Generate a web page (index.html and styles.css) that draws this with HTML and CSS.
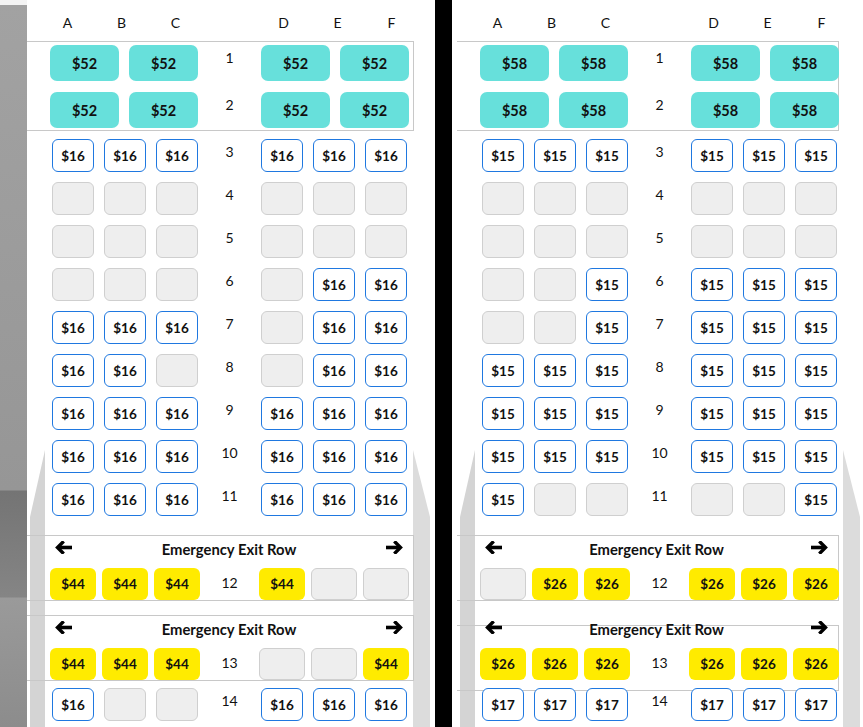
FILE: index.html
```html
<!DOCTYPE html>
<html lang="en">
<head>
<meta charset="utf-8">
<title>Seat map</title>
<link rel="stylesheet" href="styles.css">
</head>
<body>
<div class="strip"></div>

<section class="panel panel--left">
  <div class="map">
    <div class="cols"><span>A</span><span>B</span><span>C</span><span></span><span>D</span><span>E</span><span>F</span></div>

    <div class="prem">
      <div class="prow"><div class="grp"><span class="p">$52</span><span class="p">$52</span></div><span class="num">1</span><div class="grp"><span class="p">$52</span><span class="p">$52</span></div></div>
      <div class="prow"><div class="grp"><span class="p">$52</span><span class="p">$52</span></div><span class="num">2</span><div class="grp"><span class="p">$52</span><span class="p">$52</span></div></div>
    </div>

    <div class="rows">
      <div class="row"><div class="grp"><span class="s">$16</span><span class="s">$16</span><span class="s">$16</span></div><span class="num">3</span><div class="grp"><span class="s">$16</span><span class="s">$16</span><span class="s">$16</span></div></div>
      <div class="row"><div class="grp"><span class="s na"></span><span class="s na"></span><span class="s na"></span></div><span class="num">4</span><div class="grp"><span class="s na"></span><span class="s na"></span><span class="s na"></span></div></div>
      <div class="row"><div class="grp"><span class="s na"></span><span class="s na"></span><span class="s na"></span></div><span class="num">5</span><div class="grp"><span class="s na"></span><span class="s na"></span><span class="s na"></span></div></div>
      <div class="row"><div class="grp"><span class="s na"></span><span class="s na"></span><span class="s na"></span></div><span class="num">6</span><div class="grp"><span class="s na"></span><span class="s">$16</span><span class="s">$16</span></div></div>
      <div class="row"><div class="grp"><span class="s">$16</span><span class="s">$16</span><span class="s">$16</span></div><span class="num">7</span><div class="grp"><span class="s na"></span><span class="s">$16</span><span class="s">$16</span></div></div>
      <div class="row"><div class="grp"><span class="s">$16</span><span class="s">$16</span><span class="s na"></span></div><span class="num">8</span><div class="grp"><span class="s na"></span><span class="s">$16</span><span class="s">$16</span></div></div>
      <div class="row"><div class="grp"><span class="s">$16</span><span class="s">$16</span><span class="s">$16</span></div><span class="num">9</span><div class="grp"><span class="s">$16</span><span class="s">$16</span><span class="s">$16</span></div></div>
      <div class="row"><div class="grp"><span class="s">$16</span><span class="s">$16</span><span class="s">$16</span></div><span class="num">10</span><div class="grp"><span class="s">$16</span><span class="s">$16</span><span class="s">$16</span></div></div>
      <div class="row"><div class="grp"><span class="s">$16</span><span class="s">$16</span><span class="s">$16</span></div><span class="num">11</span><div class="grp"><span class="s">$16</span><span class="s">$16</span><span class="s">$16</span></div></div>
    </div>

    <div class="exit exit--first">
      <div class="exit-title">
        <svg class="arrow" viewBox="0 0 18 13"><path d="M7.5 1.5 L2.5 6.5 L7.5 11.5" fill="none" stroke="#000" stroke-width="3.4" stroke-linecap="square"/><path d="M3 6.5 H17" stroke="#000" stroke-width="3.6"/></svg>
        <span class="exit-label">Emergency Exit Row</span>
        <svg class="arrow" viewBox="0 0 18 13"><path d="M10.5 1.5 L15.5 6.5 L10.5 11.5" fill="none" stroke="#000" stroke-width="3.4" stroke-linecap="square"/><path d="M1 6.5 H15" stroke="#000" stroke-width="3.6"/></svg>
      </div>
      <div class="xrow"><div class="grp"><span class="x">$44</span><span class="x">$44</span><span class="x">$44</span></div><span class="num">12</span><div class="grp"><span class="x">$44</span><span class="x na"></span><span class="x na"></span></div></div>
    </div>

    <div class="exit">
      <div class="exit-title">
        <svg class="arrow" viewBox="0 0 18 13"><path d="M7.5 1.5 L2.5 6.5 L7.5 11.5" fill="none" stroke="#000" stroke-width="3.4" stroke-linecap="square"/><path d="M3 6.5 H17" stroke="#000" stroke-width="3.6"/></svg>
        <span class="exit-label">Emergency Exit Row</span>
        <svg class="arrow" viewBox="0 0 18 13"><path d="M10.5 1.5 L15.5 6.5 L10.5 11.5" fill="none" stroke="#000" stroke-width="3.4" stroke-linecap="square"/><path d="M1 6.5 H15" stroke="#000" stroke-width="3.6"/></svg>
      </div>
      <div class="xrow"><div class="grp"><span class="x">$44</span><span class="x">$44</span><span class="x">$44</span></div><span class="num">13</span><div class="grp"><span class="x na"></span><span class="x na"></span><span class="x">$44</span></div></div>
    </div>

    <div class="rows rows--tail">
      <div class="row"><div class="grp"><span class="s">$16</span><span class="s na"></span><span class="s na"></span></div><span class="num">14</span><div class="grp"><span class="s">$16</span><span class="s">$16</span><span class="s">$16</span></div></div>
    </div>
  </div>
</section>

<div class="divider"></div>

<section class="panel panel--right">
  <div class="map">
    <div class="cols"><span>A</span><span>B</span><span>C</span><span></span><span>D</span><span>E</span><span>F</span></div>

    <div class="prem prem--narrow">
      <div class="prow"><div class="grp"><span class="p">$58</span><span class="p">$58</span></div><span class="num">1</span><div class="grp"><span class="p">$58</span><span class="p">$58</span></div></div>
      <div class="prow"><div class="grp"><span class="p">$58</span><span class="p">$58</span></div><span class="num">2</span><div class="grp"><span class="p">$58</span><span class="p">$58</span></div></div>
    </div>

    <div class="rows">
      <div class="row"><div class="grp"><span class="s">$15</span><span class="s">$15</span><span class="s">$15</span></div><span class="num">3</span><div class="grp"><span class="s">$15</span><span class="s">$15</span><span class="s">$15</span></div></div>
      <div class="row"><div class="grp"><span class="s na"></span><span class="s na"></span><span class="s na"></span></div><span class="num">4</span><div class="grp"><span class="s na"></span><span class="s na"></span><span class="s na"></span></div></div>
      <div class="row"><div class="grp"><span class="s na"></span><span class="s na"></span><span class="s na"></span></div><span class="num">5</span><div class="grp"><span class="s na"></span><span class="s na"></span><span class="s na"></span></div></div>
      <div class="row"><div class="grp"><span class="s na"></span><span class="s na"></span><span class="s">$15</span></div><span class="num">6</span><div class="grp"><span class="s">$15</span><span class="s">$15</span><span class="s">$15</span></div></div>
      <div class="row"><div class="grp"><span class="s na"></span><span class="s na"></span><span class="s">$15</span></div><span class="num">7</span><div class="grp"><span class="s">$15</span><span class="s">$15</span><span class="s">$15</span></div></div>
      <div class="row"><div class="grp"><span class="s">$15</span><span class="s">$15</span><span class="s">$15</span></div><span class="num">8</span><div class="grp"><span class="s">$15</span><span class="s">$15</span><span class="s">$15</span></div></div>
      <div class="row"><div class="grp"><span class="s">$15</span><span class="s">$15</span><span class="s">$15</span></div><span class="num">9</span><div class="grp"><span class="s">$15</span><span class="s">$15</span><span class="s">$15</span></div></div>
      <div class="row"><div class="grp"><span class="s">$15</span><span class="s">$15</span><span class="s">$15</span></div><span class="num">10</span><div class="grp"><span class="s">$15</span><span class="s">$15</span><span class="s">$15</span></div></div>
      <div class="row"><div class="grp"><span class="s">$15</span><span class="s na"></span><span class="s na"></span></div><span class="num">11</span><div class="grp"><span class="s na"></span><span class="s na"></span><span class="s">$15</span></div></div>
    </div>

    <div class="exit exit--first exit--narrow">
      <div class="exit-title">
        <svg class="arrow" viewBox="0 0 18 13"><path d="M7.5 1.5 L2.5 6.5 L7.5 11.5" fill="none" stroke="#000" stroke-width="3.4" stroke-linecap="square"/><path d="M3 6.5 H17" stroke="#000" stroke-width="3.6"/></svg>
        <span class="exit-label">Emergency Exit Row</span>
        <svg class="arrow" viewBox="0 0 18 13"><path d="M10.5 1.5 L15.5 6.5 L10.5 11.5" fill="none" stroke="#000" stroke-width="3.4" stroke-linecap="square"/><path d="M1 6.5 H15" stroke="#000" stroke-width="3.6"/></svg>
      </div>
      <div class="xrow"><div class="grp"><span class="x na"></span><span class="x">$26</span><span class="x">$26</span></div><span class="num">12</span><div class="grp"><span class="x">$26</span><span class="x">$26</span><span class="x">$26</span></div></div>
    </div>

    <div class="exit exit--narrow exit--shift">
      <div class="exit-title">
        <svg class="arrow" viewBox="0 0 18 13"><path d="M7.5 1.5 L2.5 6.5 L7.5 11.5" fill="none" stroke="#000" stroke-width="3.4" stroke-linecap="square"/><path d="M3 6.5 H17" stroke="#000" stroke-width="3.6"/></svg>
        <span class="exit-label">Emergency Exit Row</span>
        <svg class="arrow" viewBox="0 0 18 13"><path d="M10.5 1.5 L15.5 6.5 L10.5 11.5" fill="none" stroke="#000" stroke-width="3.4" stroke-linecap="square"/><path d="M1 6.5 H15" stroke="#000" stroke-width="3.6"/></svg>
      </div>
      <div class="xrow"><div class="grp"><span class="x">$26</span><span class="x">$26</span><span class="x">$26</span></div><span class="num">13</span><div class="grp"><span class="x">$26</span><span class="x">$26</span><span class="x">$26</span></div></div>
    </div>

    <div class="rows rows--tail">
      <div class="row"><div class="grp"><span class="s">$17</span><span class="s">$17</span><span class="s">$17</span></div><span class="num">14</span><div class="grp"><span class="s">$17</span><span class="s">$17</span><span class="s">$17</span></div></div>
    </div>
  </div>
</section>
</body>
</html>
```

FILE: styles.css
```css
* {
  box-sizing: border-box;
  margin: 0;
  padding: 0;
}

html,
body {
  width: 863px;
  height: 727px;
  overflow: hidden;
}

body {
  display: flex;
  background: #fff;
  font-family: Lato, "Liberation Sans", sans-serif;
  color: #111;
}

.strip {
  flex: none;
  width: 27px;
  height: 727px;
  background: linear-gradient(to bottom,
    #f4f4f4 0, #f4f4f4 5px,
    #a2a2a2 5px, #969696 490px,
    #747474 491px, #858585 597px,
    #9a9a9a 598px, #8c8c8c 727px);
}

.divider {
  flex: none;
  width: 17px;
  height: 727px;
  background: #000;
}

.panel {
  flex: none;
  height: 727px;
  background: #fff;
}

.panel--left {
  width: 408px;
}

.panel--right {
  width: 411px;
  padding-left: 5px;
}

.map {
  position: relative;
  z-index: 0;
  width: 406px;
  height: 727px;
}

/* fuselage walls */
.map::before,
.map::after {
  content: "";
  position: absolute;
  z-index: -1;
  top: 450px;
  height: 277px;
  background: #d4d4d4;
}

.map::before {
  left: 3px;
  width: 15px;
  clip-path: polygon(100% 0, 100% 100%, 0 100%, 0 67px);
}

.map::after {
  left: 386px;
  width: 17px;
  background: #dcdcdc;
  clip-path: polygon(0 0, 100% 67px, 100% 100%, 0 100%);
}

/* column letters */
.cols {
  display: grid;
  grid-template-columns: repeat(7, 54px);
  height: 41px;
  padding: 14px 0 0 13.5px;
  font-size: 14px;
  line-height: 18px;
  text-align: center;
}

.num {
  font-size: 14px;
  line-height: 26px;
  text-align: center;
}

.grp {
  display: flex;
  gap: 10px;
}

/* premium block */
.prem {
  display: flex;
  flex-direction: column;
  gap: 11px;
  width: 387px;
  height: 90px;
  padding: 3px 0 2px 23px;
  border: 1px solid #c8c8c8;
  border-left: none;
}

.prem--narrow {
  width: 382px;
}

.prow {
  display: grid;
  grid-template-columns: 148px 43px 148px;
  column-gap: 10px;
}

.p {
  display: flex;
  align-items: center;
  justify-content: center;
  width: 69px;
  height: 36px;
  border-radius: 7px;
  background: #67e0db;
  font-size: 14.5px;
  font-weight: 700;
}

/* standard rows */
.rows {
  display: flex;
  flex-direction: column;
  gap: 10px;
  margin-top: 8px;
  padding-left: 25px;
}

.rows--tail {
  margin-top: 7px;
}

.row {
  display: grid;
  grid-template-columns: 146px 43px 146px;
  column-gap: 10px;
}

.s {
  display: flex;
  align-items: center;
  justify-content: center;
  width: 42px;
  height: 33px;
  padding-top: 1px;
  border: 1px solid #1f78e0;
  border-radius: 6px;
  background: #fff;
  font-size: 13.5px;
  font-weight: 700;
}

.s.na,
.x.na {
  border: 1px solid #cfcfcf;
  background: #eeeeee;
}

/* exit rows */
.exit {
  position: relative;
  width: 387px;
  height: 66px;
  margin-top: 14px;
  border: 1px solid #c8c8c8;
  border-left: none;
}

.exit--first {
  margin-top: 19px;
}

.exit--narrow {
  width: 382px;
}

.exit--shift {
  border-color: transparent;
}

.exit--shift::before {
  content: "";
  position: absolute;
  z-index: -1;
  top: 9px;
  left: 0;
  right: -1px;
  bottom: -11px;
  border: 1px solid #c8c8c8;
  border-left: none;
}

.exit-title {
  display: flex;
  align-items: flex-start;
  height: 32px;
  padding: 4px 10px 0 28px;
}

.arrow {
  flex: none;
  width: 18px;
  height: 13px;
  margin-top: 1px;
}

.exit-label {
  flex: 1;
  text-align: center;
  font-size: 14.8px;
  font-weight: 700;
  line-height: 18px;
}

.xrow {
  display: grid;
  grid-template-columns: 150px 59px 150px;
  padding-left: 23px;
}

.xrow .grp {
  gap: 6px;
}

.xrow .num {
  line-height: 30px;
}

.x {
  display: flex;
  align-items: center;
  justify-content: center;
  width: 46px;
  height: 32px;
  border-radius: 6px;
  background: #ffeb00;
  font-size: 13.5px;
  font-weight: 700;
}
```
